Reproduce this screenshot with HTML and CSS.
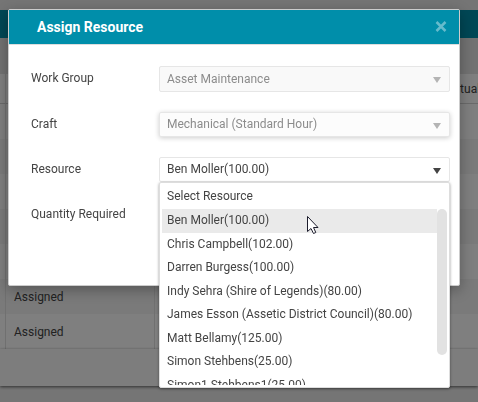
FILE: index.html
```
<!DOCTYPE html>
<html lang="en">
<head>
    <meta charset="UTF-8">
    <title>Assign Resource</title>
    <link rel="stylesheet" href="styles.css">
</head>
<body>
    <div class="page">
        <div class="panel-header"></div>
        <div class="panel-toolbar"></div>
        <table class="grid">
            <thead>
                <tr><th class="col-edge"></th><th class="col-status"></th><th></th><th class="col-actual">Actual</th></tr>
            </thead>
            <tbody>
                <tr><td></td><td></td><td></td><td></td></tr>
                <tr><td></td><td></td><td></td><td></td></tr>
                <tr><td></td><td></td><td></td><td></td></tr>
                <tr><td></td><td></td><td></td><td></td></tr>
                <tr><td></td><td></td><td></td><td></td></tr>
                <tr><td></td><td>Assigned</td><td></td><td></td></tr>
                <tr><td></td><td>Assigned</td><td></td><td></td></tr>
            </tbody>
        </table>
        <div class="panel-footer"></div>
    </div>

    <div class="backdrop"></div>

    <div class="modal" role="dialog" aria-labelledby="modalTitle">
        <div class="modal-header">
            <h1 id="modalTitle">Assign Resource</h1>
            <button type="button" class="close" aria-label="Close">
                <svg width="12" height="12" viewBox="0 0 12 12"><path d="M1.500 1L10.500 10M10.500 1L1.500 10" stroke="currentColor" stroke-width="2.500" fill="none"/></svg>
            </button>
        </div>
        <form class="modal-body">
            <div class="form-row">
                <label for="workGroup">Work Group</label>
                <div class="select disabled">
                    <select id="workGroup" class="boxed" disabled><option>Asset Maintenance</option></select>
                </div>
            </div>
            <div class="form-row">
                <label for="craft">Craft</label>
                <div class="select disabled raised">
                    <select id="craft" disabled><option>Mechanical (Standard Hour)</option></select>
                </div>
            </div>
            <div class="form-row">
                <label for="resource">Resource</label>
                <div class="select">
                    <select id="resource"><option>Ben Moller(100.00)</option></select>
                    <div class="dropdown">
                        <div class="option-label">Select Resource</div>
                        <div class="options">
                            <ul role="listbox" aria-label="Resource">
                                <li role="option" class="hover" aria-selected="true">Ben Moller(100.00)</li>
                                <li role="option">Chris Campbell(102.00)</li>
                                <li role="option">Darren Burgess(100.00)</li>
                                <li role="option">Indy Sehra (Shire of Legends)(80.00)</li>
                                <li role="option">James Esson (Assetic District Council)(80.00)</li>
                                <li role="option">Matt Bellamy(125.00)</li>
                                <li role="option">Simon Stehbens(25.00)</li>
                                <li role="option">Simon1 Stehbens1(25.00)</li>
                            </ul>
                            <div class="scroll-thumb"></div>
                        </div>
                    </div>
                </div>
            </div>
            <div class="form-row">
                <span class="label">Quantity Required</span>
            </div>
        </form>
    </div>

    <svg class="cursor" width="13" height="20" viewBox="0 0 13 20"><path d="M1.500 1.500V16.500L5 13.500L7.500 18.500L9.800 17.500L7.500 12.500H12Z" fill="#fff" stroke="#1c1c2c" stroke-width="1"/></svg>
</body>
</html>
```
FILE: styles.css
```
* { box-sizing: border-box; }
body {
    margin: 0;
    min-height: 100vh;
    overflow: hidden;
    background: #ebebeb;
    color: #444;
    font-family: Roboto, Arial, sans-serif;
    font-size: 12px;
}

/* page behind the dialog */
.page { padding-top: 10px; }
.panel-header { height: 28px; background: #008eaa; }
.panel-toolbar { height: 36px; background: #e4e4e4; }
.grid { width: 100%; border-collapse: separate; border-spacing: 0; table-layout: fixed; background: #fff; }
.grid th {
    height: 30px;
    padding: 0 0 0 8px;
    border-right: 1px solid #e0e0e0;
    border-bottom: 1px solid #d5d5d5;
    font-weight: normal;
    text-align: left;
}
.grid td { height: 35px; padding: 0 8px; border-right: 1px solid #e0e0e0; }
.grid tbody tr:nth-child(even) { background: #f5f5f5; }
.grid .col-edge { width: 6px; padding: 0; }
.grid tbody td:first-child { padding: 0; }
.grid .col-status { width: 149px; }
.grid th:last-child, .grid td:last-child { border-right: none; }
.grid .col-actual { width: 40px; white-space: nowrap; }
.panel-footer { height: 37px; background: #fafafa; box-shadow: 0 1px 3px rgba(0,0,0,0.6); }

.backdrop { position: fixed; inset: 0; background: rgba(0,0,0,0.5); }

/* dialog */
.modal {
    position: absolute;
    top: 9px;
    left: 8px;
    right: 18px;
    background: #fff;
    border: 1px solid #ccc;
    border-radius: 2px;
    box-shadow: 0 4px 14px rgba(0,0,0,0.3);
}
.modal-header {
    display: flex;
    align-items: center;
    justify-content: space-between;
    height: 35px;
    padding: 0 12px 0 28px;
    background: #008eaa;
    border-bottom: 1px solid #ddd;
}
.modal-header h1 { margin: 0; color: #fff; font-size: 14px; font-weight: bold; }
.close { display: flex; padding: 0; background: none; border: none; color: #66bbcc; cursor: pointer; }
.modal-body { padding: 21px 9px 38px 22px; }
.form-row { display: flex; min-height: 25px; margin-bottom: 20px; }
.form-row label, .label { width: 128px; line-height: 24px; }

.select { position: relative; flex: 1; }
.select select {
    display: block;
    width: 100%;
    height: 25px;
    padding: 0 28px 1px 7px;
    appearance: none;
    background: #fff;
    border: 1px solid #e6e6e6;
    border-radius: 2px;
    color: #444;
    font: inherit;
    opacity: 1;
}
.select .boxed { height: 26px; padding-bottom: 0; }
.select::after {
    content: "";
    position: absolute;
    top: 11px;
    right: 9px;
    border: 4px solid transparent;
    border-top: 6px solid #444;
    border-bottom: 0;
}
.disabled select { background: #f9f9f9; color: #8c8c8c; }
.disabled::after { border-top-color: #b4b4b4; }
.raised select { background: #fcfcfc; box-shadow: 0 1px 5px rgba(0,0,0,0.2); }

.dropdown {
    position: absolute;
    top: 25px;
    left: 0;
    right: 0;
    padding: 2px;
    background: #fff;
    border: 1px solid #ddd;
    border-radius: 2px;
    box-shadow: 0 1px 3px rgba(0,0,0,0.4);
}
.option-label { padding: 0 5px 2px; line-height: 22px; }
.options { position: relative; height: 176px; overflow: hidden; }
.options ul { display: flex; flex-direction: column; height: 188px; margin: 0; padding: 0; list-style: none; }
.options li { display: flex; flex: 1; align-items: center; margin-right: 10px; padding: 0 5px 1px; white-space: nowrap; }
.options .hover { background: #eaeaea; }
.scroll-thumb { position: absolute; top: 0; right: 0; width: 10px; height: 146px; background: #e2e2e2; border-radius: 5px; }

.cursor { position: absolute; top: 215px; left: 306px; }
```
